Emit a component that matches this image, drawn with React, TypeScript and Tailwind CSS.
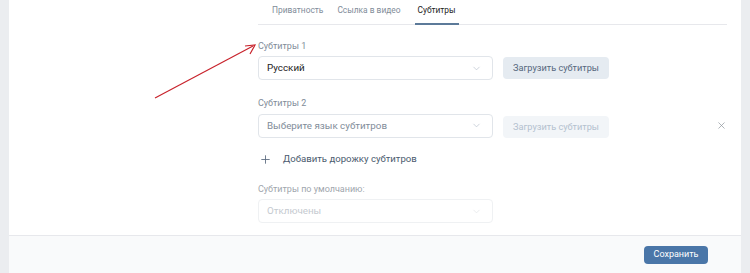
import { ChevronDown, Plus, X } from "lucide-react";

const Select = ({ value, muted, disabled }: { value: string; muted?: boolean; disabled?: boolean }) => (
  <div
    className={`flex h-[24px] w-[235px] items-center justify-between rounded-[4px] border pl-[8px] pr-[10px] ${
      disabled ? "border-[#eff1f3]" : "border-[#e1e5ea]"
    } bg-white`}
  >
    <span
      className={`text-[9.8px] leading-[12px] ${
        disabled ? "text-[#c5cad0]" : muted ? "text-[#818c99]" : "text-[#222]"
      }`}
    >
      {value}
    </span>
    <ChevronDown size={11} strokeWidth={1.5} className={disabled ? "text-[#e0e3e6]" : "text-[#b8c1cc]"} />
  </div>
);

const UploadButton = ({ disabled }: { disabled?: boolean }) => (
  <button
    className={`h-[22px] w-[106px] whitespace-nowrap rounded-[4px] text-[9.2px] leading-[12px] ${
      disabled ? "bg-[#f2f5f8] text-[#b4c1cf]" : "bg-[#e5ebf1] text-[#55677d]"
    }`}
  >
    Загрузить субтитры
  </button>
);

const App = () => {
  return (
    <div
      className="relative flex h-[273px] w-[750px] bg-[#ebedf0]"
      style={{ fontFamily: "Roboto, 'Liberation Sans', sans-serif" }}
    >
      <div className="ml-[9px] mr-[9px] flex flex-1 flex-col bg-white">
        <div className="flex-1 pl-[249px]">
          <div className="mr-[14px] flex h-[25px] gap-[14px] border-b border-[#e7e8ec] pl-[14px] text-[8.4px] leading-[11px]">
            <span className="pt-[5px] text-[#818c99]">Приватность</span>
            <span className="pt-[5px] text-[#818c99]">Ссылка в видео</span>
            <span className="-mb-px border-b-2 border-[#5c7a99] px-[3px] pt-[5px] text-[#222]">Субтитры</span>
          </div>

          <div className="mt-[16px] text-[9px] leading-[11px] text-[#818c99]">Субтитры 1</div>
          <div className="mt-[4px] flex items-center gap-[10px]">
            <Select value="Русский" />
            <UploadButton />
          </div>

          <div className="mt-[18px] text-[9px] leading-[11px] text-[#818c99]">Субтитры 2</div>
          <div className="mt-[4px] flex items-center">
            <Select value="Выберите язык субтитров" muted />
            <div className="ml-[10px]">
              <UploadButton disabled />
            </div>
            <X size={11} strokeWidth={1.5} className="ml-[107px] text-[#8a9199]" />
          </div>

          <div className="mt-[14px] flex h-[14px] items-center text-[9.6px] text-[#4a5a6e]">
            <Plus size={13} strokeWidth={1.6} className="ml-[1px] text-[#5a6a7e]" />
            <span className="ml-[11px]">Добавить дорожку субтитров</span>
          </div>

          <div className="mt-[18px] text-[9px] leading-[11px] text-[#a0a6ad]">Субтитры по умолчанию:</div>
          <div className="mt-[4px]">
            <Select value="Отключены" disabled />
          </div>
        </div>

        <div className="flex h-[38px] items-center justify-end border-t border-[#e7e8ec] bg-[#f9fafb] pr-[33px]">
          <button className="h-[18px] w-[64px] rounded-[4px] bg-[#4a76a8] text-[9px] text-white">
            Сохранить
          </button>
        </div>
      </div>

      <svg className="absolute left-0 top-0" width="750" height="273">
        <line x1="155" y1="98" x2="253" y2="46" stroke="#c8232c" strokeWidth="1.2" />
        <path d="M245 46 L255 45 L250 54" fill="none" stroke="#c8232c" strokeWidth="1.2" />
      </svg>
    </div>
  );
};

export default App;
